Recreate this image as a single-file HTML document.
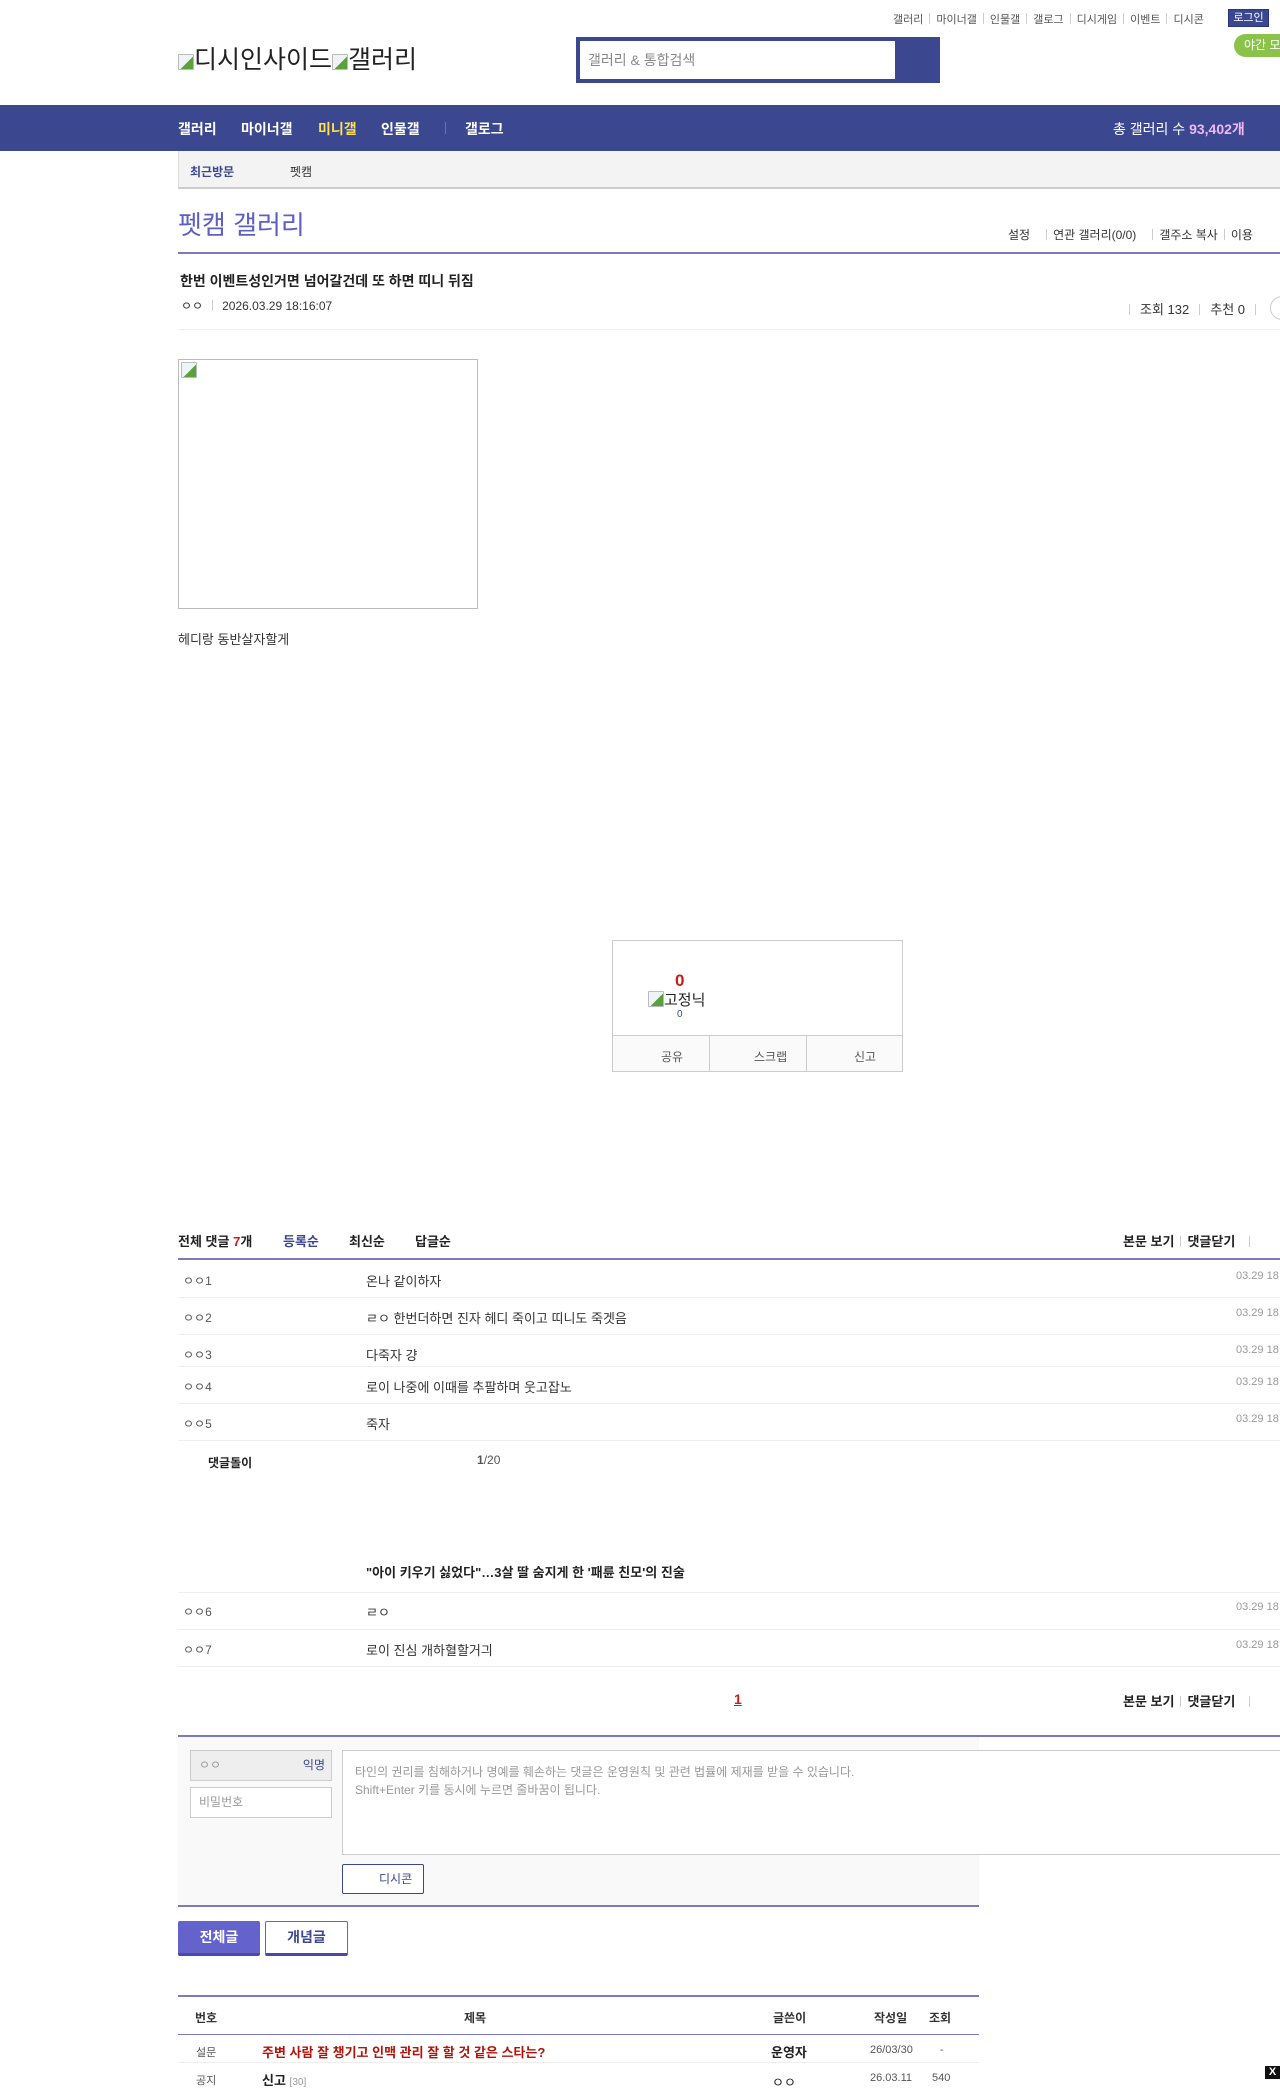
<!DOCTYPE html>
<html><head><meta charset="utf-8">
<style>
*{margin:0;padding:0;box-sizing:border-box}
body{width:1280px;height:2079px;position:relative;overflow:hidden;background:#fff;font-family:"Liberation Sans","Noto Sans CJK KR",sans-serif;color:#333;font-size:13px}
.a{position:absolute;white-space:nowrap}
.hl{position:absolute;height:1px;background:#eee}
.sep{display:inline-block;width:1px;height:11px;background:#ccc;margin:0 6px;vertical-align:-1px}
.bi{display:inline-block;width:16px;height:16px;border:1px solid #bbb;border-radius:1px;background:linear-gradient(135deg,#eef3f8 55%,#5aa03c 56%);vertical-align:-2px}
</style></head><body>
<!-- top links -->
<div class="a" style="left:893px;top:11px;font-size:11px;color:#555">갤러리<span class="sep"></span>마이너갤<span class="sep"></span>인물갤<span class="sep"></span>갤로그<span class="sep"></span>디시게임<span class="sep"></span>이벤트<span class="sep"></span>디시콘</div>
<div class="a" style="left:1228px;top:9px;width:41px;height:18px;background:#3b4890;border:1px solid #29357a;color:#fff;font-size:11px;line-height:16px;text-align:center">로그인</div>
<div class="a" style="left:1234px;top:34px;width:60px;height:23px;background:#8bc34a;border-radius:12px;color:#fff;font-size:12px;line-height:23px;padding-left:10px">야간 모</div>
<!-- logo -->
<div class="a" style="left:178px;top:40px;font-size:25px;color:#222"><span class="bi"></span>디시인사이드<span class="bi"></span>갤러리</div>
<!-- search -->
<div class="a" style="left:576px;top:37px;width:364px;height:46px;background:#3b4890"></div>
<div class="a" style="left:580px;top:41px;width:315px;height:38px;background:#fff;font-size:14px;color:#888;line-height:38px;padding-left:8px">갤러리 &amp; 통합검색</div>
<!-- nav -->
<div class="a" style="left:0;top:105px;width:1280px;height:46px;background:#3b4890"></div>
<div class="a" style="left:178px;top:119px;font-size:14px;font-weight:bold;color:#fff">갤러리</div>
<div class="a" style="left:241px;top:119px;font-size:14px;font-weight:bold;color:#fff">마이너갤</div>
<div class="a" style="left:318px;top:119px;font-size:14px;font-weight:bold;color:#ffe14d">미니갤</div>
<div class="a" style="left:381px;top:119px;font-size:14px;font-weight:bold;color:#fff">인물갤</div>
<div class="a" style="left:445px;top:122px;width:1px;height:12px;background:#6a75b0"></div>
<div class="a" style="left:465px;top:119px;font-size:14px;font-weight:bold;color:#fff">갤로그</div>
<div class="a" style="left:1113px;top:119px;font-size:14px;color:#fff">총 갤러리 수 <b style="color:#f0b8f5">93,402개</b></div>
<!-- sub bar -->
<div class="a" style="left:178px;top:151px;width:1102px;height:38px;background:#f3f3f3;border-left:1px solid #ddd;border-bottom:2px solid #ccc"></div>
<div class="a" style="left:190px;top:163px;font-size:12px;font-weight:bold;color:#3b4890">최근방문</div>
<div class="a" style="left:290px;top:163px;font-size:12px;color:#333">펫캠</div>
<!-- title -->
<div class="a" style="left:178px;top:205px;font-size:26px;color:#5e5fc5">펫캠 갤러리</div>
<div class="a" style="left:1008px;top:226px;font-size:12px;color:#333">설정<span class="sep" style="margin-left:16px"></span>연관 갤러리(0/0)<span class="sep" style="margin-left:16px"></span>갤주소 복사<span class="sep"></span>이용</div>
<div class="a" style="left:178px;top:252px;width:1102px;height:2px;background:#7a79c2"></div>
<!-- post head -->
<div class="a" style="left:180px;top:271px;font-size:14px;font-weight:bold;color:#222">한번 이벤트성인거면 넘어갈건데 또 하면 띠니 뒤짐</div>
<div class="a" style="left:181px;top:297px;font-size:12px;color:#333">ㅇㅇ<span class="sep" style="margin:0 9px"></span>2026.03.29 18:16:07</div>
<div class="a" style="left:1129px;top:299px;font-size:13px;color:#333"><span class="sep" style="margin:0 10px 0 0"></span>조회 132<span class="sep" style="margin:0 10px"></span>추천 0<span class="sep" style="margin:0 10px"></span></div>
<div class="a" style="left:1270px;top:296px;width:24px;height:24px;border:1px solid #ccc;border-radius:50%"></div>
<div class="hl" style="left:178px;top:329px;width:1102px"></div>
<!-- image -->
<div class="a" style="left:178px;top:359px;width:300px;height:250px;border:1px solid #bbb;padding:2px"><span class="bi"></span></div>
<div class="a" style="left:178px;top:629px;font-size:13px;color:#333">헤디랑 동반살자할게</div>
<!-- recommend box -->
<div class="a" style="left:612px;top:940px;width:291px;height:132px;border:1px solid #ccc"></div>
<div class="a" style="left:612px;top:1035px;width:291px;height:37px;border:1px solid #ccc;background:#fafafa"></div>
<div class="a" style="left:709px;top:1035px;width:1px;height:37px;background:#ccc"></div>
<div class="a" style="left:806px;top:1035px;width:1px;height:37px;background:#ccc"></div>
<div class="a" style="left:675px;top:971px;font-size:17px;font-weight:bold;color:#c4201a">0</div>
<div class="a" style="left:648px;top:989px;font-size:15px;color:#222"><span class="bi"></span>고정닉</div>
<div class="a" style="left:677px;top:1009px;font-size:10px;color:#3b4890">0</div>
<div class="a" style="left:661px;top:1048px;font-size:12px;color:#555">공유</div>
<div class="a" style="left:754px;top:1048px;font-size:12px;color:#555">스크랩</div>
<div class="a" style="left:854px;top:1048px;font-size:12px;color:#555">신고</div>
<!-- comments -->
<div class="a" style="left:178px;top:1231px;font-size:13px;font-weight:bold;color:#222">전체 댓글 <span style="color:#c4201a">7</span>개</div>
<div class="a" style="left:283px;top:1231px;font-size:13px;font-weight:bold;color:#3b4890">등록순</div>
<div class="a" style="left:349px;top:1231px;font-size:13px;font-weight:bold;color:#222">최신순</div>
<div class="a" style="left:415px;top:1231px;font-size:13px;font-weight:bold;color:#222">답글순</div>
<div class="a" style="left:1123px;top:1231px;font-size:13px;font-weight:bold;color:#222">본문 보기<span class="sep"></span>댓글닫기<span class="sep" style="margin-left:14px"></span></div>
<div class="a" style="left:178px;top:1258px;width:1102px;height:2px;background:#7a79c2"></div>

<div class="a" style="left:183px;top:1272px;font-size:12px;color:#555">ㅇㅇ1</div><div class="a" style="left:366px;top:1271px;font-size:13px">온나 같이하자</div><div class="a" style="left:1236px;top:1270px;font-size:11px;color:#999">03.29 18</div>
<div class="hl" style="left:178px;top:1297px;width:1102px"></div>
<div class="a" style="left:183px;top:1309px;font-size:12px;color:#555">ㅇㅇ2</div><div class="a" style="left:366px;top:1308px;font-size:13px">ㄹㅇ 한번더하면 진자 헤디 죽이고 띠니도 죽겟음</div><div class="a" style="left:1236px;top:1307px;font-size:11px;color:#999">03.29 18</div>
<div class="hl" style="left:178px;top:1334px;width:1102px"></div>
<div class="a" style="left:183px;top:1346px;font-size:12px;color:#555">ㅇㅇ3</div><div class="a" style="left:366px;top:1345px;font-size:13px">다죽자 걍</div><div class="a" style="left:1236px;top:1344px;font-size:11px;color:#999">03.29 18</div>
<div class="hl" style="left:178px;top:1366px;width:1102px"></div>
<div class="a" style="left:183px;top:1378px;font-size:12px;color:#555">ㅇㅇ4</div><div class="a" style="left:366px;top:1377px;font-size:13px">로이 나중에 이때를 추팔하며 웃고잡노</div><div class="a" style="left:1236px;top:1376px;font-size:11px;color:#999">03.29 18</div>
<div class="hl" style="left:178px;top:1403px;width:1102px"></div>
<div class="a" style="left:183px;top:1415px;font-size:12px;color:#555">ㅇㅇ5</div><div class="a" style="left:366px;top:1414px;font-size:13px">죽자</div><div class="a" style="left:1236px;top:1413px;font-size:11px;color:#999">03.29 18</div>
<div class="hl" style="left:178px;top:1440px;width:1102px"></div>
<div class="a" style="left:208px;top:1454px;font-size:12px;font-weight:bold;color:#222">댓글돌이</div>
<div class="a" style="left:477px;top:1453px;font-size:12px;color:#555"><b>1</b>/20</div>
<div class="a" style="left:366px;top:1562px;font-size:13px;font-weight:bold;color:#222">"아이 키우기 싫었다"…3살 딸 숨지게 한 '패륜 친모'의 진술</div>
<div class="hl" style="left:178px;top:1592px;width:1102px"></div>
<div class="a" style="left:183px;top:1603px;font-size:12px;color:#555">ㅇㅇ6</div><div class="a" style="left:366px;top:1602px;font-size:13px">ㄹㅇ</div><div class="a" style="left:1236px;top:1601px;font-size:11px;color:#999">03.29 18</div>
<div class="hl" style="left:178px;top:1629px;width:1102px"></div>
<div class="a" style="left:183px;top:1641px;font-size:12px;color:#555">ㅇㅇ7</div><div class="a" style="left:366px;top:1640px;font-size:13px">로이 진심 개하혈할거긔</div><div class="a" style="left:1236px;top:1639px;font-size:11px;color:#999">03.29 18</div>
<div class="hl" style="left:178px;top:1666px;width:1102px"></div>
<div class="a" style="left:734px;top:1691px;font-size:14px;font-weight:bold;color:#c4201a;text-decoration:underline">1</div>
<div class="a" style="left:1123px;top:1691px;font-size:13px;font-weight:bold;color:#222">본문 보기<span class="sep"></span>댓글닫기<span class="sep" style="margin-left:14px"></span></div>
<!-- write box -->
<div class="a" style="left:178px;top:1735px;width:1102px;height:2px;background:#7a79c2"></div>
<div class="a" style="left:178px;top:1737px;width:801px;height:169px;background:#f9f9f9"></div>
<div class="a" style="left:190px;top:1750px;width:142px;height:31px;background:#eee;border:1px solid #ccc;font-size:12px;color:#999;line-height:29px;padding-left:8px">ㅇㅇ<span style="position:absolute;right:6px;color:#3b4890">익명</span></div>
<div class="a" style="left:190px;top:1787px;width:142px;height:31px;background:#fff;border:1px solid #ccc;font-size:12px;color:#999;line-height:29px;padding-left:8px">비밀번호</div>
<div class="a" style="left:342px;top:1750px;width:950px;height:105px;background:#fff;border:1px solid #ccc;font-size:12px;color:#999;padding:12px 12px;line-height:18px">타인의 권리를 침해하거나 명예를 훼손하는 댓글은 운영원칙 및 관련 법률에 제재를 받을 수 있습니다.<br>Shift+Enter 키를 동시에 누르면 줄바꿈이 됩니다.</div>
<div class="a" style="left:342px;top:1864px;width:82px;height:30px;background:#fff;border:1px solid #3b4890;border-radius:2px;font-size:12px;color:#3b4890;line-height:28px;padding-left:36px">디시콘</div>
<div class="a" style="left:178px;top:1905px;width:801px;height:2px;background:#7a79c2"></div>
<div class="a" style="left:178px;top:1921px;width:82px;height:35px;background:#6463cc;border-bottom:3px solid #4b4aaa;border-radius:2px;color:#fff;font-size:14px;font-weight:bold;text-align:center;line-height:32px">전체글</div>
<div class="a" style="left:265px;top:1921px;width:83px;height:35px;background:#fff;border:1px solid #6463cc;border-bottom:3px solid #4b4aaa;border-radius:2px;color:#3b4890;font-size:14px;font-weight:bold;text-align:center;line-height:31px">개념글</div>
<!-- list -->
<div class="a" style="left:178px;top:1995px;width:801px;height:2px;background:#7a79c2"></div>
<div class="a" style="left:195px;top:2009px;font-size:12px;font-weight:bold;color:#333">번호</div>
<div class="a" style="left:464px;top:2009px;font-size:12px;font-weight:bold;color:#333">제목</div>
<div class="a" style="left:773px;top:2009px;font-size:12px;font-weight:bold;color:#333">글쓴이</div>
<div class="a" style="left:874px;top:2009px;font-size:12px;font-weight:bold;color:#333">작성일</div>
<div class="a" style="left:929px;top:2009px;font-size:12px;font-weight:bold;color:#333">조회</div>
<div class="a" style="left:178px;top:2034px;width:801px;height:1px;background:#7a79c2"></div>
<div class="a" style="left:196px;top:2044px;font-size:11px;color:#555">설문</div>
<div class="a" style="left:262px;top:2042px;font-size:13px;font-weight:bold;color:#b0140a">주변 사람 잘 챙기고 인맥 관리 잘 할 것 같은 스타는?</div>
<div class="a" style="left:771px;top:2042px;font-size:13px;font-weight:bold;color:#222">운영자</div>
<div class="a" style="left:870px;top:2044px;font-size:11px;color:#555">26/03/30</div>
<div class="a" style="left:940px;top:2044px;font-size:11px;color:#555">-</div>
<div class="hl" style="left:178px;top:2062px;width:801px"></div>
<div class="a" style="left:196px;top:2072px;font-size:11px;color:#555">공지</div>
<div class="a" style="left:262px;top:2070px;font-size:13px;font-weight:bold;color:#222">신고 <span style="font-size:10px;color:#999;font-weight:normal">[30]</span></div>
<div class="a" style="left:772px;top:2072px;font-size:13px;color:#222">ㅇㅇ</div>
<div class="a" style="left:870px;top:2072px;font-size:11px;color:#555">26.03.11</div>
<div class="a" style="left:932px;top:2072px;font-size:11px;color:#555">540</div>
<div class="a" style="left:1265px;top:2066px;width:15px;height:13px;background:#111;color:#fff;font-size:11px;font-weight:bold;text-align:center;line-height:13px">X</div>
</body></html>
